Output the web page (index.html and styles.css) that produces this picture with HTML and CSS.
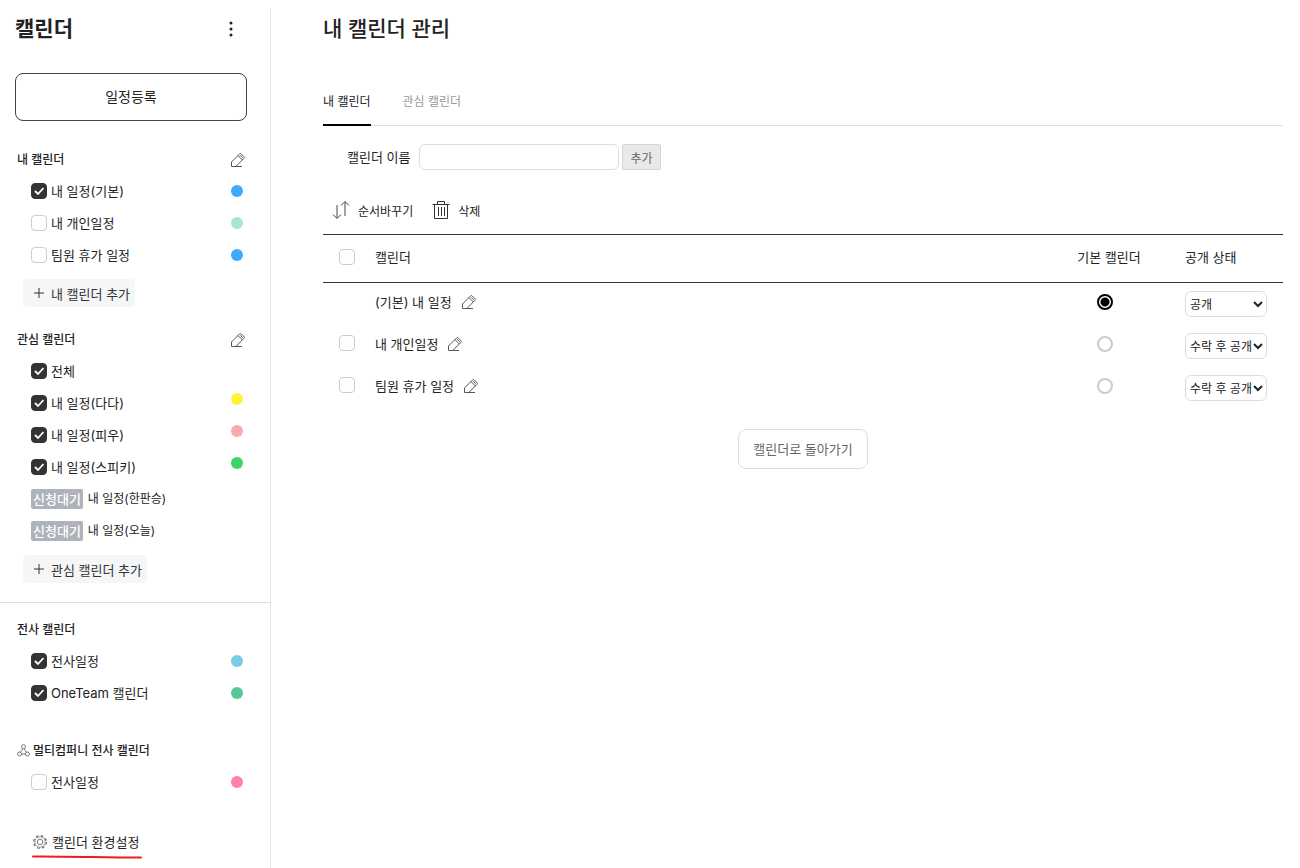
FILE: index.html
```html
<!DOCTYPE html>
<html lang="ko">
<head>
    <meta charset="UTF-8">
    <meta name="viewport" content="width=device-width, initial-scale=1.0">
    <title>내 캘린더 관리</title>
    <link rel="stylesheet" href="styles.css">
</head>
<body>
    <svg width="0" height="0" class="defs" aria-hidden="true">
        <symbol id="pencil" viewBox="0 0 16 16">
            <path d="M1.500 14.500V10L9.700 1.800a1 1 0 0 1 1.400 0l3 3a1 1 0 0 1 0 1.400L6 14.300M1.500 14.500H12M8 3.600l4.400 4.400M10.300 3.300l2.400 2.400"/>
        </symbol>
        <symbol id="plus" viewBox="0 0 12 12">
            <path d="M6 1v10M1 6h10"/>
        </symbol>
    </svg>

    <aside class="sidebar">
        <div class="sidebar-top">
            <h1>캘린더</h1>
            <button class="icon-btn" aria-label="더보기">
                <svg width="16" height="16" viewBox="0 0 16 16" fill="#222"><circle cx="8" cy="2" r="1.5"/><circle cx="8" cy="8" r="1.5"/><circle cx="8" cy="14" r="1.5"/></svg>
            </button>
        </div>
        <button class="write-btn">일정등록</button>

        <section class="group">
            <div class="group-title">
                <h2>내 캘린더</h2>
                <button class="icon-btn" aria-label="내 캘린더 편집"><svg class="icon"><use href="#pencil"/></svg></button>
            </div>
            <ul>
                <li><label><input type="checkbox" checked>내 일정(기본)</label><span class="dot blue"></span></li>
                <li><label><input type="checkbox">내 개인일정</label><span class="dot mint"></span></li>
                <li><label><input type="checkbox">팀원 휴가 일정</label><span class="dot blue"></span></li>
            </ul>
            <button class="add-btn"><svg class="plus"><use href="#plus"/></svg>내 캘린더 추가</button>
        </section>

        <section class="group interest">
            <div class="group-title">
                <h2>관심 캘린더</h2>
                <button class="icon-btn" aria-label="관심 캘린더 편집"><svg class="icon"><use href="#pencil"/></svg></button>
            </div>
            <ul>
                <li><label><input type="checkbox" checked>전체</label></li>
                <li><label><input type="checkbox" checked>내 일정(다다)</label><span class="dot yellow"></span></li>
                <li><label><input type="checkbox" checked>내 일정(피우)</label><span class="dot salmon"></span></li>
                <li><label><input type="checkbox" checked>내 일정(스피키)</label><span class="dot green"></span></li>
                <li class="waiting"><span class="badge">신청대기</span>내 일정(한판승)</li>
                <li class="waiting"><span class="badge">신청대기</span>내 일정(오늘)</li>
            </ul>
            <button class="add-btn"><svg class="plus"><use href="#plus"/></svg>관심 캘린더 추가</button>
        </section>

        <section class="group company">
            <div class="group-title">
                <h2>전사 캘린더</h2>
            </div>
            <ul>
                <li><label><input type="checkbox" checked>전사일정</label><span class="dot sky"></span></li>
                <li><label><input type="checkbox" checked>OneTeam 캘린더</label><span class="dot teal"></span></li>
            </ul>
        </section>

        <section class="group multi">
            <div class="group-title">
                <svg width="13" height="13" viewBox="0 0 13 13" fill="none" stroke="#777"><circle cx="6.5" cy="2.7" r="2"/><circle cx="2.6" cy="10" r="2"/><circle cx="10.4" cy="10" r="2"/><path d="M5.8 4.6L4.6 6.7 3.3 8.2M7.2 4.6l1.2 2.1 1.3 1.5M4.6 10h3.8"/></svg>
                <h2>멀티컴퍼니 전사 캘린더</h2>
            </div>
            <ul>
                <li><label><input type="checkbox">전사일정</label><span class="dot pink"></span></li>
            </ul>
        </section>

        <a href="#" class="setting">
            <span>
                <svg width="16" height="16" viewBox="0 0 16 16" fill="none" stroke="#777"><circle cx="8" cy="8" r="6.300" stroke-width="1.400" stroke-dasharray="2.600 2.350"/><circle cx="8" cy="8" r="5.200" stroke="#999"/><circle cx="8" cy="8" r="2.800"/></svg>
                캘린더 환경설정
            </span>
            <svg width="110" height="4" viewBox="0 0 110 4" fill="none" stroke="#ed1c24" stroke-width="2" stroke-linecap="round"><path d="M1 1.5C30 1.2 70 2.4 109 2.6"/></svg>
        </a>
    </aside>

    <main>
        <h1>내 캘린더 관리</h1>
        <nav class="tabs">
            <a href="#" class="active">내 캘린더</a>
            <a href="#">관심 캘린더</a>
        </nav>

        <form class="add-form">
            <label for="calendar_name">캘린더 이름</label>
            <input type="text" id="calendar_name" name="calendar_name">
            <button type="button">추가</button>
        </form>

        <div class="toolbar">
            <button>
                <svg width="18" height="20" viewBox="0 0 18 20" fill="none" stroke="#444"><path d="M5 5v13M1 14.500l4 4 4-4M13 16V2M9 5.500l4-4 4 4"/></svg>
                순서바꾸기
            </button>
            <button>
                <svg width="18" height="20" viewBox="0 0 18 20" fill="none" stroke="#333"><path d="M.5 4.500h17M5.500 4.500v-3h7v3M2.500 4.500v14h13v-14M6.500 7v9M9.500 7v9M12.500 7v9"/></svg>
                삭제
            </button>
        </div>

        <table>
            <thead>
                <tr>
                    <th class="col-check"><input type="checkbox" aria-label="전체 선택"></th>
                    <th>캘린더</th>
                    <th class="col-default">기본 캘린더</th>
                    <th class="col-state">공개 상태</th>
                </tr>
            </thead>
            <tbody>
                <tr>
                    <td class="col-check"></td>
                    <td><span class="name">(기본) 내 일정<button class="icon-btn" aria-label="이름 편집"><svg class="icon"><use href="#pencil"/></svg></button></span></td>
                    <td class="col-default"><input type="radio" name="default_calendar" aria-label="내 일정" checked></td>
                    <td class="col-state">
                        <select aria-label="내 일정 공개 상태"><option>공개</option><option>수락 후 공개</option></select>
                    </td>
                </tr>
                <tr>
                    <td class="col-check"><input type="checkbox" aria-label="내 개인일정 선택"></td>
                    <td><span class="name">내 개인일정<button class="icon-btn" aria-label="이름 편집"><svg class="icon"><use href="#pencil"/></svg></button></span></td>
                    <td class="col-default"><input type="radio" name="default_calendar" aria-label="내 개인일정"></td>
                    <td class="col-state">
                        <select aria-label="내 개인일정 공개 상태"><option>공개</option><option selected>수락 후 공개</option></select>
                    </td>
                </tr>
                <tr>
                    <td class="col-check"><input type="checkbox" aria-label="팀원 휴가 일정 선택"></td>
                    <td><span class="name">팀원 휴가 일정<button class="icon-btn" aria-label="이름 편집"><svg class="icon"><use href="#pencil"/></svg></button></span></td>
                    <td class="col-default"><input type="radio" name="default_calendar" aria-label="팀원 휴가 일정"></td>
                    <td class="col-state">
                        <select aria-label="팀원 휴가 일정 공개 상태"><option>공개</option><option selected>수락 후 공개</option></select>
                    </td>
                </tr>
            </tbody>
        </table>

        <button class="back-btn">캘린더로 돌아가기</button>
    </main>
</body>
</html>
```
FILE: styles.css
```css
* {
    box-sizing: border-box;
}

body {
    display: grid;
    grid-template-columns: 271px 1fr;
    margin: 0;
    padding-top: 8px;
    min-height: 100vh;
    background-color: #fff;
    color: #222;
    font-family: Inter, "Noto Sans CJK KR", sans-serif;
    font-size: 13px;
    line-height: 20px;
}

.defs {
    position: absolute;
}

h1,
h2,
ul {
    margin: 0;
    padding: 0;
}

h1 {
    font-size: 21px;
    line-height: 42px;
    font-weight: 500;
}

h2 {
    padding-top: 1px;
    font-size: 12px;
    line-height: 20px;
    font-weight: 500;
}

button,
input,
select {
    font-family: inherit;
    font-size: 13px;
    color: #222;
}

button {
    background: none;
    border: none;
    padding: 0;
    cursor: pointer;
}

svg {
    display: block;
}

a {
    color: inherit;
    text-decoration: none;
}

.icon {
    width: 16px;
    height: 16px;
    fill: none;
    stroke: #555;
}

/* Checkbox and radio */
input[type="checkbox"],
input[type="radio"] {
    appearance: none;
    display: block;
    flex: none;
    width: 16px;
    height: 16px;
    margin: 0;
    background-color: #fff;
}

input[type="checkbox"] {
    border: 1px solid #ccc;
    border-radius: 4px;
}

input[type="checkbox"]:checked {
    border-color: #333;
    background: #333 url("data:image/svg+xml,%3Csvg xmlns='http://www.w3.org/2000/svg' width='14' height='14' fill='none' stroke='white' stroke-width='1.8'%3E%3Cpath d='M3 7l3 3 5.500-6'/%3E%3C/svg%3E") center no-repeat;
}

input[type="radio"] {
    border: 2px solid #ccc;
    border-radius: 50%;
}

input[type="radio"]:checked {
    border-color: #000;
    background: radial-gradient(circle, #000 4px, #fff 5px);
}

/* Sidebar */
.sidebar {
    border-right: 1px solid #e5e5e5;
}

.sidebar-top {
    display: flex;
    justify-content: space-between;
    align-items: center;
    height: 42px;
    padding: 0 31px 0 15px;
}

.sidebar-top h1 {
    font-weight: 700;
}

.write-btn {
    display: block;
    width: calc(100% - 38px);
    height: 48px;
    margin: 23px 23px 23px 15px;
    padding-bottom: 2px;
    border: 1px solid #444;
    border-radius: 8px;
    font-size: 14px;
}

.group-title {
    display: flex;
    align-items: center;
    gap: 3px;
    height: 31px;
    padding: 0 24px 0 17px;
}

.group-title .icon-btn {
    margin-left: auto;
}

.group ul {
    list-style: none;
    padding: 0 27px 0 31px;
}

.group li {
    display: flex;
    align-items: center;
    justify-content: space-between;
    height: 32px;
}

.group label {
    display: flex;
    align-items: center;
    gap: 4px;
}

.group .waiting {
    justify-content: flex-start;
    gap: 5px;
    font-size: 12px;
}

.badge {
    padding: 0 2px;
    background-color: #adb2bc;
    border-radius: 2px;
    color: #fff;
    font-size: 13px;
    font-weight: 500;
}

.dot {
    width: 12px;
    height: 12px;
    border-radius: 50%;
}

.blue { background-color: #3fa9ff; }
.mint { background-color: #abe5ce; }
.yellow { background-color: #fff338; }
.salmon { background-color: #f9aaaa; }
.green { background-color: #3dd566; }
.sky { background-color: #79cce6; }
.teal { background-color: #57c797; }
.pink { background-color: #ff80ab; }

.add-btn {
    display: flex;
    align-items: center;
    gap: 6px;
    height: 28px;
    margin: 8px 0 0 23px;
    padding: 0 5px 0 10px;
    background-color: #f5f6f8;
    border-radius: 4px;
    color: #333;
}

.plus {
    width: 12px;
    height: 12px;
    stroke: #333;
}

.interest {
    margin-top: 17px;
}

.interest .dot {
    margin-bottom: 8px;
}

.company {
    margin-top: 19px;
    padding-top: 11px;
    border-top: 1px solid #ddd;
}

.multi {
    margin-top: 26px;
}

.setting {
    display: inline-block;
    margin: 34px 0 0 32px;
}

.setting span {
    display: flex;
    align-items: center;
    gap: 4px;
    padding-bottom: 3px;
}

/* Main */
main {
    padding: 0 17px 0 52px;
}

.tabs {
    display: flex;
    gap: 32px;
    height: 76px;
    border-bottom: 1px solid #ddd;
    align-items: flex-end;
    font-size: 12px;
    color: #999;
}

.tabs a {
    margin-bottom: -1px;
    padding-bottom: 12px;
    border-bottom: 2px solid transparent;
}

.tabs .active {
    color: #222;
    border-color: #000;
}

.add-form {
    display: flex;
    align-items: center;
    padding: 18px 24px;
}

.add-form input {
    width: 200px;
    height: 26px;
    margin: 0 3px 0 9px;
    padding: 0 8px;
    border: 1px solid #ddd;
    border-radius: 6px;
}

.add-form button {
    height: 26px;
    padding: 0 7px;
    background-color: #e9e9e9;
    border: 1px solid #d5d5d5;
    border-radius: 2px;
    color: #666;
    font-size: 12px;
}

.toolbar {
    display: flex;
    gap: 19px;
    padding: 12px 9px 14px;
}

.toolbar button {
    display: flex;
    align-items: center;
    gap: 8px;
    height: 20px;
    font-size: 12px;
}

table {
    width: 100%;
    border-collapse: separate;
    border-spacing: 0;
}

th {
    height: 49px;
    padding: 0 8px 3px;
    border-top: 1px solid #333;
    border-bottom: 1px solid #333;
    font-weight: 400;
    text-align: left;
}

td {
    height: 42px;
    padding: 0 8px 4px;
}

.col-check {
    width: 44px;
    padding-left: 16px;
}

td.col-check {
    padding-bottom: 6px;
}

.col-default {
    width: 136px;
    text-align: center;
}

.col-default input[type="radio"] {
    margin: 0 auto;
}

td.col-default {
    padding-right: 16px;
}

.col-state {
    width: 106px;
}

td.col-state {
    padding-bottom: 0;
}

.name {
    display: flex;
    align-items: center;
    gap: 9px;
}

select {
    appearance: none;
    display: block;
    width: 82px;
    height: 26px;
    padding: 0 4px;
    background: #fff url("data:image/svg+xml,%3Csvg xmlns='http://www.w3.org/2000/svg' width='10' height='8' fill='none' stroke='%23222' stroke-width='2'%3E%3Cpath d='M1 2l4 4 4-4'/%3E%3C/svg%3E") right 3px center no-repeat;
    border: 1px solid #ddd;
    border-radius: 6px;
    font-size: 12px;
}

.back-btn {
    display: block;
    height: 40px;
    margin: 20px auto;
    padding: 0 14px 2px;
    border: 1px solid #ddd;
    border-radius: 8px;
    color: #666;
}
```
